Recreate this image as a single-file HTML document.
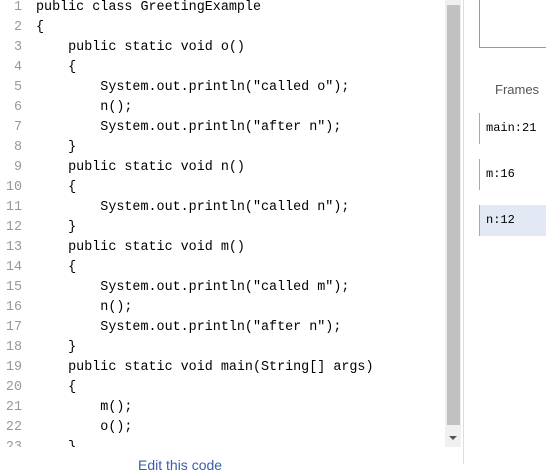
<!DOCTYPE html>
<html><head><style>
body{margin:0;width:546px;height:464px;overflow:hidden;background:#fff;position:relative;font-family:"Liberation Sans",sans-serif}
.code{position:absolute;left:0;top:-2px;width:445px;height:449px;overflow:hidden;font-family:"Liberation Mono",monospace;font-size:13.4px}
.r{height:20px;line-height:20px;white-space:pre;position:relative}
.n{display:inline-block;width:22px;text-align:right;color:#999;margin-right:14px}
.sb{position:absolute;left:445px;top:0;width:16px;height:447px;background:#f0f0f0}
.th{position:absolute;left:447px;top:5px;width:13px;height:420px;background:#c1c1c1}
.vl{position:absolute;left:463px;top:0;width:1px;height:464px;background:#ddd}
.box{position:absolute;left:479px;top:-2px;width:80px;height:48px;border:1px solid #999}
.fr{position:absolute;left:495px;top:82px;font-size:13px;color:#555}
.f{position:absolute;left:479px;width:70px;height:31px;border-left:1px solid #aaa;font-family:"Liberation Mono",monospace;font-size:12px;line-height:31px;padding-left:6px}
</style></head><body>
<div class="code">
<div class="r"><span class="n">1</span>public class GreetingExample</div>
<div class="r"><span class="n">2</span>{</div>
<div class="r"><span class="n">3</span>    public static void o()</div>
<div class="r"><span class="n">4</span>    {</div>
<div class="r"><span class="n">5</span>        System.out.println("called o");</div>
<div class="r"><span class="n">6</span>        n();</div>
<div class="r"><span class="n">7</span>        System.out.println("after n");</div>
<div class="r"><span class="n">8</span>    }</div>
<div class="r"><span class="n">9</span>    public static void n()</div>
<div class="r"><span class="n">10</span>    {</div>
<div class="r"><span class="n">11</span>        System.out.println("called n");</div>
<div class="r"><span class="n">12</span>    }</div>
<div class="r"><span class="n">13</span>    public static void m()</div>
<div class="r"><span class="n">14</span>    {</div>
<div class="r"><span class="n">15</span>        System.out.println("called m");</div>
<div class="r"><span class="n">16</span>        n();</div>
<div class="r"><span class="n">17</span>        System.out.println("after n");</div>
<div class="r"><span class="n">18</span>    }</div>
<div class="r"><span class="n">19</span>    public static void main(String[] args)</div>
<div class="r"><span class="n">20</span>    {</div>
<div class="r"><span class="n">21</span>        m();</div>
<div class="r"><span class="n">22</span>        o();</div>
<div class="r"><span class="n">23</span>    }</div>
</div>
<div class="sb"></div><div class="th"></div>
<div style="position:absolute;left:449px;top:436px;width:0;height:0;border-left:4px solid transparent;border-right:4px solid transparent;border-top:4px solid #555"></div>
<div class="vl"></div>
<div class="box"></div>
<div class="fr">Frames</div>
<div class="f" style="top:113px">main:21</div>
<div class="f" style="top:159px">m:16</div>
<div class="f" style="top:205px;background:#e2e8f4">n:12</div>
<div style="position:absolute;left:138px;top:457px;font-size:14px;color:#3b5ea8">Edit this code</div>
</body></html>
